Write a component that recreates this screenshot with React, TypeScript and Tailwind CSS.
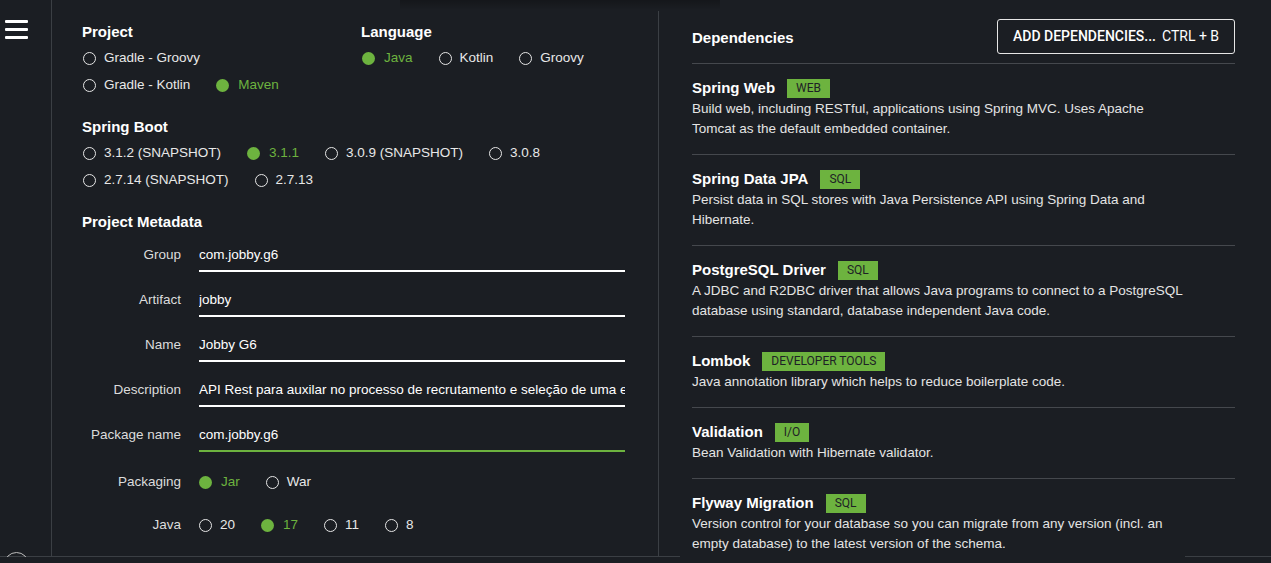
import React from 'react';

type Opt = { label: string; checked?: boolean };

const Radio: React.FC<Opt> = ({ label, checked }) => (
  <div className="flex items-center mr-[26px]">
    {checked ? (
      <span className="w-[13px] h-[13px] rounded-full bg-[#6db33f] shrink-0" />
    ) : (
      <span className="w-[13px] h-[13px] rounded-full border-[1.5px] border-[#e6e6e6] shrink-0" />
    )}
    <span className={checked ? 'ml-[9px] text-[#6db33f]' : 'ml-[8px] text-[#e8e8e8]'}>{label}</span>
  </div>
);

const RadioRow: React.FC<{ items: Opt[] }> = ({ items }) => (
  <div className="flex items-center h-[27px] pl-px">
    {items.map((o) => (
      <Radio key={o.label} {...o} />
    ))}
  </div>
);

const Heading: React.FC<{ children: React.ReactNode }> = ({ children }) => (
  <h3 className="h-[18px] leading-[18px] text-[15px] font-bold text-white">{children}</h3>
);

const Field: React.FC<{ label: string; value: string; focused?: boolean }> = ({ label, value, focused }) => (
  <div className="flex items-start mb-[18px]">
    <div className="w-[99px] text-right leading-[20px] text-[#dcdcdc]">{label}</div>
    <div
      className={`ml-[18px] w-[426px] leading-[20px] pb-[5px] border-b-2 whitespace-nowrap overflow-hidden text-white ${
        focused ? 'border-[#6db33f]' : 'border-white'
      }`}
    >
      {value}
    </div>
  </div>
);

const deps = [
  {
    name: 'Spring Web',
    tag: 'WEB',
    desc: 'Build web, including RESTful, applications using Spring MVC. Uses Apache Tomcat as the default embedded container.',
  },
  {
    name: 'Spring Data JPA',
    tag: 'SQL',
    desc: 'Persist data in SQL stores with Java Persistence API using Spring Data and Hibernate.',
  },
  {
    name: 'PostgreSQL Driver',
    tag: 'SQL',
    desc: 'A JDBC and R2DBC driver that allows Java programs to connect to a PostgreSQL database using standard, database independent Java code.',
  },
  { name: 'Lombok', tag: 'DEVELOPER TOOLS', desc: 'Java annotation library which helps to reduce boilerplate code.' },
  { name: 'Validation', tag: 'I/O', desc: 'Bean Validation with Hibernate validator.' },
  {
    name: 'Flyway Migration',
    tag: 'SQL',
    desc: 'Version control for your database so you can migrate from any version (incl. an empty database) to the latest version of the schema.',
  },
];

export default function App() {
  return (
    <div className="relative w-[1271px] h-[563px] overflow-hidden bg-[#1b1e23] text-[13.5px] font-['Liberation_Sans',Arial,sans-serif]">
      {/* header shadow */}
      <div className="absolute top-0 left-[400px] w-[320px] h-[10px] bg-gradient-to-b from-black/25 to-transparent pointer-events-none" />

      <div className="flex h-[556px]">
        {/* Sidebar */}
        <aside className="w-[52px] shrink-0 border-r border-[#3b3f44] pt-[20px] pl-[5px]">
          <svg width="23" height="19" viewBox="0 0 23 19" fill="#fff">
            <rect x="0" y="0" width="23" height="3" rx="1" />
            <rect x="0" y="8" width="23" height="3" rx="1" />
            <rect x="0" y="16" width="23" height="3" rx="1" />
          </svg>
        </aside>

        {/* Left: project settings */}
        <section className="w-[606px] shrink-0 pl-[30px] pt-[23px]">
          <div className="flex">
            <div className="w-[279px]">
              <Heading>Project</Heading>
              <div className="mt-[4px]">
                <RadioRow items={[{ label: 'Gradle - Groovy' }]} />
                <RadioRow items={[{ label: 'Gradle - Kotlin' }, { label: 'Maven', checked: true }]} />
              </div>
            </div>
            <div>
              <Heading>Language</Heading>
              <div className="mt-[4px]">
                <RadioRow items={[{ label: 'Java', checked: true }, { label: 'Kotlin' }, { label: 'Groovy' }]} />
              </div>
            </div>
          </div>

          <div className="mt-[19px]">
            <Heading>Spring Boot</Heading>
            <div className="mt-[4px]">
              <RadioRow
                items={[
                  { label: '3.1.2 (SNAPSHOT)' },
                  { label: '3.1.1', checked: true },
                  { label: '3.0.9 (SNAPSHOT)' },
                  { label: '3.0.8' },
                ]}
              />
              <RadioRow items={[{ label: '2.7.14 (SNAPSHOT)' }, { label: '2.7.13' }]} />
            </div>
          </div>

          <div className="mt-[19px]">
            <Heading>Project Metadata</Heading>
            <div className="mt-[14px]">
              <Field label="Group" value="com.jobby.g6" />
              <Field label="Artifact" value="jobby" />
              <Field label="Name" value="Jobby G6" />
              <Field
                label="Description"
                value="API Rest para auxilar no processo de recrutamento e seleção de uma empresa"
              />
              <Field label="Package name" value="com.jobby.g6" focused />

              <div className="flex items-center h-[20px] mt-[20px]">
                <div className="w-[99px] text-right text-[#dcdcdc]">Packaging</div>
                <div className="ml-[18px] flex items-center">
                  <Radio label="Jar" checked />
                  <Radio label="War" />
                </div>
              </div>
              <div className="flex items-center h-[20px] mt-[23px]">
                <div className="w-[99px] text-right text-[#dcdcdc]">Java</div>
                <div className="ml-[18px] flex items-center">
                  <Radio label="20" />
                  <Radio label="17" checked />
                  <Radio label="11" />
                  <Radio label="8" />
                </div>
              </div>
            </div>
          </div>
        </section>

        <div className="w-px mt-[11px] bg-[#3b3f44] shrink-0" />

        {/* Right: dependencies */}
        <section className="flex-1 pl-[33px] pr-[36px] pt-[19px]">
          <div className="flex items-center justify-between h-[35px]">
            <h3 className="text-[15px] font-bold text-white mt-[3px]">Dependencies</h3>
            <button className="h-[35px] w-[238px] shrink-0 flex items-center justify-center whitespace-nowrap border border-[#e6e6e6] rounded-[3px] text-white text-[14px] font-['Roboto',sans-serif]">
              <span className="font-medium">ADD DEPENDENCIES...</span>
              <span className="ml-[6px]">CTRL + B</span>
            </button>
          </div>

          <div className="mt-[9px]">
            {deps.map((d) => (
              <div key={d.name} className="border-t border-[#45484d] pt-[14px] pb-[15px]">
                <div className="flex items-center h-[20px] gap-[12px]">
                  <span className="text-[15px] font-bold text-white">{d.name}</span>
                  <span className="h-[19px] leading-[19px] px-[9px] bg-[#6db33f] text-[#1e2226] text-[12px] font-['Roboto',sans-serif]">
                    {d.tag}
                  </span>
                </div>
                <p className="max-w-[496px] pt-px leading-[20px] text-[#e4e4e4]">{d.desc}</p>
              </div>
            ))}
          </div>
        </section>
      </div>

      {/* footer edge */}
      <div className="flex h-[7px]">
        <div className="w-[680px] border-t border-[#3b3f44]" />
        <div className="w-[505px]" />
        <div className="flex-1 border-t border-[#3b3f44]" />
      </div>

      {/* partially visible round button bottom-left */}
      <div className="absolute left-[4px] top-[552px] w-[25px] h-[5px] overflow-hidden">
        <div className="w-[25px] h-[25px] rounded-full border border-[#bdbdbd]" />
      </div>
    </div>
  );
}
